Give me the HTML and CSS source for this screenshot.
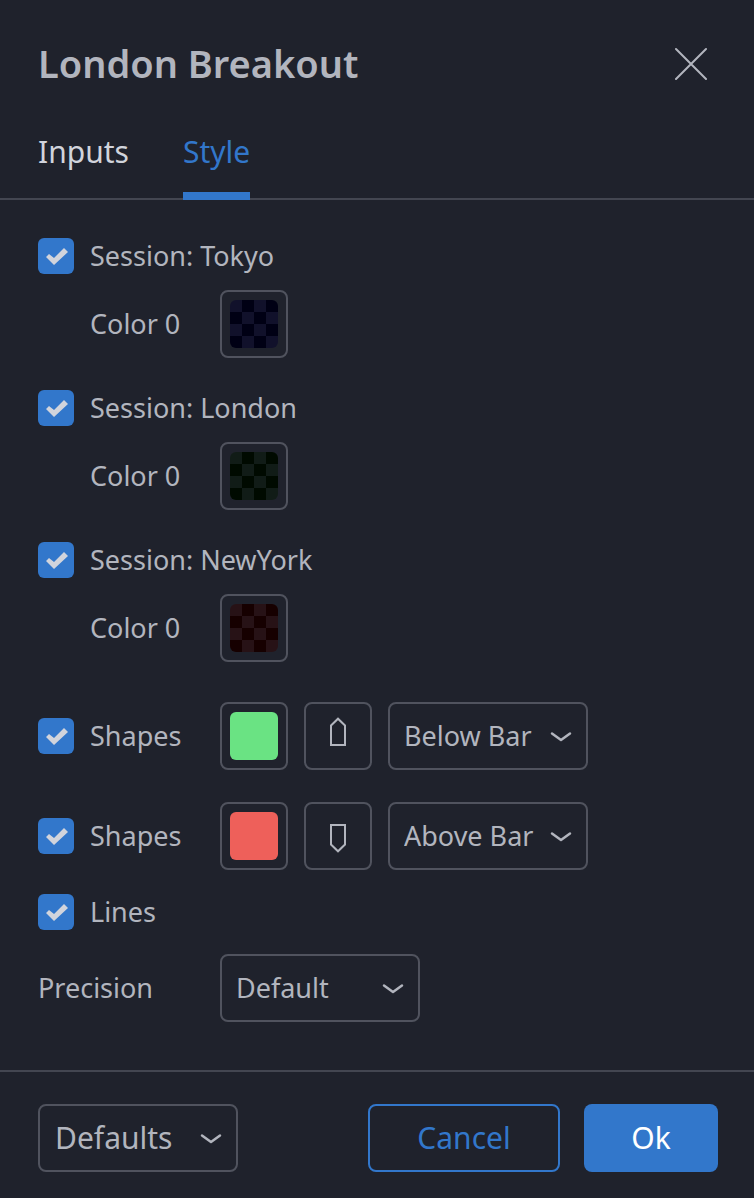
FILE: index.html
```html
<!DOCTYPE html>
<html lang="en">
<head>
<meta charset="utf-8">
<meta name="viewport" content="width=device-width, initial-scale=1">
<title>London Breakout</title>
<link rel="stylesheet" href="styles.css">
</head>
<body>
<main class="dialog">
  <header class="header">
    <h1 class="title">London Breakout</h1>
    <button class="close" type="button" aria-label="Close">
      <svg width="34" height="34" viewBox="0 0 34 34"><path d="M2 3 32 33M32 3 2 33"/></svg>
    </button>
  </header>
  <nav class="tabs">
    <button class="tab" type="button">Inputs</button>
    <button class="tab tab-active" type="button">Style</button>
  </nav>

  <form class="content">
    <section class="group">
      <label class="check"><input class="box" type="checkbox" checked>Session: Tokyo</label>
      <div class="row">
        <span class="sub-label">Color 0</span>
        <button class="tile" type="button" aria-label="Tokyo color"><span class="swatch checker navy"></span></button>
      </div>
    </section>
    <section class="group">
      <label class="check"><input class="box" type="checkbox" checked>Session: London</label>
      <div class="row">
        <span class="sub-label">Color 0</span>
        <button class="tile" type="button" aria-label="London color"><span class="swatch checker forest"></span></button>
      </div>
    </section>
    <section class="group">
      <label class="check"><input class="box" type="checkbox" checked>Session: NewYork</label>
      <div class="row">
        <span class="sub-label">Color 0</span>
        <button class="tile" type="button" aria-label="NewYork color"><span class="swatch checker maroon"></span></button>
      </div>
    </section>

    <section class="shapes">
      <div class="row">
        <label class="check"><input class="box" type="checkbox" checked>Shapes</label>
        <div class="controls">
          <button class="tile" type="button" aria-label="Shape color"><span class="swatch green"></span></button>
          <button class="tile" type="button" aria-label="Label up">
            <svg class="shape" width="64" height="64" viewBox="0 0 64 64"><path d="M25 41V21.5L32 14.7 39 21.5V41Z"/></svg>
          </button>
          <div class="dropdown">
            <select class="select" aria-label="Placement of the green shape"><option>Below Bar</option><option>Above Bar</option></select>
            <svg class="chevron" width="22" height="12" viewBox="0 0 22 12"><path d="M2 3.5 11 10 20 3.5"/></svg>
          </div>
        </div>
      </div>
      <div class="row">
        <label class="check"><input class="box" type="checkbox" checked>Shapes</label>
        <div class="controls">
          <button class="tile" type="button" aria-label="Shape color"><span class="swatch red"></span></button>
          <button class="tile" type="button" aria-label="Label down">
            <svg class="shape" width="64" height="64" viewBox="0 0 64 64"><path d="M25 21V40.5L32 47.3 39 40.5V21Z"/></svg>
          </button>
          <div class="dropdown">
            <select class="select" aria-label="Placement of the red shape"><option>Above Bar</option><option>Below Bar</option></select>
            <svg class="chevron" width="22" height="12" viewBox="0 0 22 12"><path d="M2 3.5 11 10 20 3.5"/></svg>
          </div>
        </div>
      </div>
    </section>

    <section class="extras">
      <label class="check"><input class="box" type="checkbox" checked>Lines</label>
      <div class="row">
        <label for="precision">Precision</label>
        <div class="dropdown">
          <select class="select" id="precision"><option>Default</option></select>
          <svg class="chevron" width="22" height="12" viewBox="0 0 22 12"><path d="M2 3.5 11 10 20 3.5"/></svg>
        </div>
      </div>
    </section>
  </form>

  <footer class="footer">
    <div class="dropdown">
      <select class="select select-large" aria-label="Defaults"><option>Defaults</option></select>
      <svg class="chevron" width="22" height="12" viewBox="0 0 22 12"><path d="M2 3.5 11 10 20 3.5"/></svg>
    </div>
    <div class="actions">
      <button class="button cancel" type="button">Cancel</button>
      <button class="button ok" type="button">Ok</button>
    </div>
  </footer>
</main>
</body>
</html>
```
FILE: styles.css
```css
:root {
  --bg: #1f222c;
  --text: #b2b5be;
  --bright: #d1d4dc;
  --blue: #3277cb;
  --border: #50535e;
  --rule: #434651;
}

* { box-sizing: border-box; }

body {
  margin: 0;
  background: var(--bg);
  color: var(--text);
  font: 27px/36px "Trebuchet MS", "Noto Sans", sans-serif;
}

button, select, input { margin: 0; font: inherit; color: inherit; }
button { padding: 0; border: 0; background: none; cursor: pointer; }
svg { display: block; fill: none; stroke: var(--text); }

.dialog { display: flex; flex-direction: column; min-height: 100vh; }

.header {
  display: flex;
  align-items: center;
  justify-content: space-between;
  padding: 35px 46px 0 38px;
}
.title { margin: 0; font-size: 38px; line-height: 56px; font-weight: 600; }
.close svg { stroke-width: 2; stroke-linecap: round; }

.tabs {
  display: flex;
  gap: 54px;
  padding: 36px 38px 0;
  border-bottom: 2px solid var(--rule);
}
.tab {
  margin-bottom: -2px;
  padding-bottom: 15px;
  border-bottom: 8px solid transparent;
  color: var(--bright);
  font-size: 30px;
  line-height: 50px;
}
.tab-active { border-color: var(--blue); color: var(--blue); }

.content { flex: 1; padding: 38px 36px 48px 38px; }
.group { display: grid; gap: 16px; margin-bottom: 32px; }
.row { display: grid; grid-template-columns: 182px 1fr; align-items: center; }
.sub-label { padding-left: 52px; }
.check { display: flex; align-items: center; gap: 16px; }
.shapes { display: grid; gap: 32px; margin-top: 40px; }
.extras { display: grid; gap: 24px; margin-top: 24px; }
.controls { display: flex; gap: 16px; }

.box {
  appearance: none;
  flex: none;
  width: 36px;
  height: 36px;
  border-radius: 6px;
  background: var(--border);
}
.box:checked { background: var(--blue); }
.box:checked::before {
  content: "";
  display: block;
  height: 36px;
  background: var(--bright);
  clip-path: polygon(8px 19px, 11px 16px, 16px 20px, 26px 10px, 30px 14px, 16px 27px);
}

.tile {
  display: grid;
  place-items: center;
  width: 68px;
  height: 68px;
  border: 2px solid var(--border);
  border-radius: 8px;
}
.shape { stroke-width: 2; }
.swatch { width: 48px; height: 48px; border-radius: 6px; }
.green { background: #6ae383; }
.red { background: #ee605a; }
.checker {
  background: repeating-conic-gradient(var(--dark) 0 25%, var(--light) 0 50%) 0 0 / 24px 24px;
}
.navy { --dark: #000014; --light: #11112b; }
.forest { --dark: #000a00; --light: #111c17; }
.maroon { --dark: #160000; --light: #271216; }

.dropdown { display: grid; width: 200px; align-items: center; }
.select {
  grid-area: 1 / 1;
  appearance: none;
  width: 100%;
  height: 68px;
  padding: 0 14px;
  border: 2px solid var(--border);
  border-radius: 8px;
  background: transparent;
}
.select option { background: var(--bg); }
.select-large { padding: 0 15px; font-size: 30px; }
.chevron {
  grid-area: 1 / 1;
  justify-self: end;
  margin-right: 16px;
  stroke-width: 2.5;
  stroke-linecap: round;
  stroke-linejoin: round;
  pointer-events: none;
}

.footer {
  display: flex;
  justify-content: space-between;
  padding: 32px 36px 26px 38px;
  border-top: 2px solid var(--rule);
}
.actions { display: flex; gap: 24px; }
.button { height: 68px; border-radius: 8px; font-size: 30px; }
.cancel { width: 192px; border: 2px solid var(--blue); color: var(--blue); }
.ok { width: 134px; background: var(--blue); color: #fff; }
```
